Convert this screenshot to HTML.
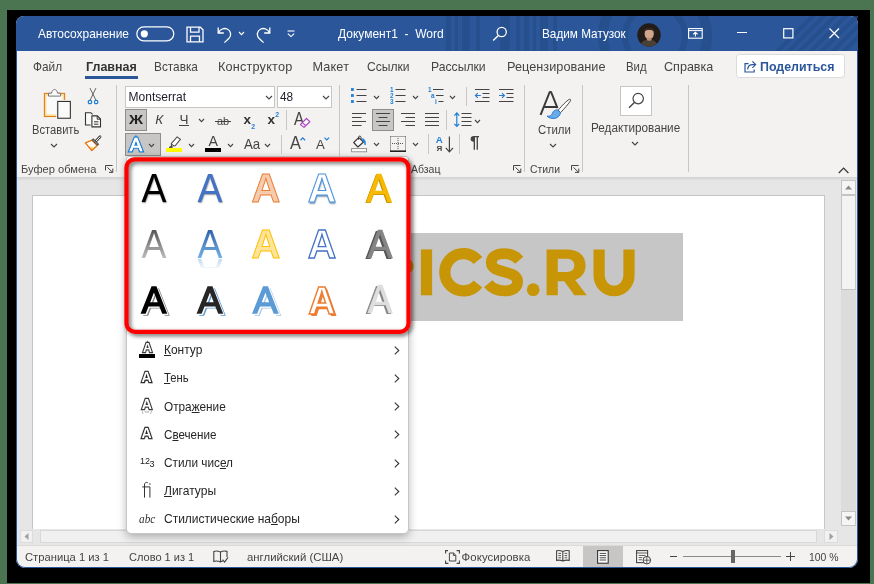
<!DOCTYPE html>
<html><head><meta charset="utf-8"><title>Word</title>
<style>
html,body{margin:0;padding:0;}
body{width:874px;height:584px;overflow:hidden;background:#4b7551;position:relative;font-family:"Liberation Sans",sans-serif;}
#r div,#r span,#r svg{position:absolute;}
#r span{white-space:pre;}
#r svg{overflow:visible;}
#r{will-change:transform;}
</style></head><body><div id="r">
<div style="left:7px;top:10px;width:863px;height:573px;background:#000;"></div>
<div style="left:16px;top:16px;width:842px;height:552px;background:#f3f2f1;border-radius:8px 8px 9px 9px;overflow:hidden;"></div>
<div style="left:16px;top:16px;width:842px;height:35px;background:#2b579a;border-radius:8px 8px 0 0;"></div>
<svg style="left:380px;top:16px;overflow:hidden;" width="478" height="35" viewBox="0 0 478 35"><g fill="#254d8a" opacity="0.75"><rect x="66" y="0" width="5" height="35" /><rect x="75" y="0" width="3" height="35" /><rect x="82" y="0" width="8" height="35" /><rect x="96" y="0" width="4" height="35" /><rect x="120" y="0" width="10" height="35" /><rect x="136" y="0" width="4" height="35" /><rect x="144" y="0" width="5" height="35" /><rect x="153" y="0" width="3" height="35" /><rect x="160" y="0" width="8" height="35" /><rect x="173" y="0" width="4" height="35" /><circle cx="275" cy="20" r="52" fill="none" stroke="#254d8a" stroke-width="10"/><circle cx="275" cy="20" r="30" fill="none" stroke="#254d8a" stroke-width="6"/><path d="M395 35 L430 0 h6 L401 35 z"/><path d="M406 35 L441 0 h6 L412 35 z"/><path d="M417 35 L452 0 h6 L423 35 z"/><path d="M428 35 L463 0 h6 L434 35 z"/><path d="M439 35 L474 0 h6 L445 35 z"/><path d="M450 35 L485 0 h6 L456 35 z"/><path d="M461 35 L496 0 h6 L467 35 z"/></g></svg>
<span style="left:38.30px;top:25.00px;font-size:13px;line-height:18px;color:#fff;transform:scaleX(0.9180);transform-origin:0 50%;">Автосохранение</span>
<svg style="left:136px;top:26px;" width="39" height="16" viewBox="0 0 39 16"><rect x="0.8" y="0.8" width="37" height="14" rx="7" fill="none" stroke="#fff" stroke-width="1.2"/><circle cx="8.3" cy="7.8" r="3.6" fill="#fff"/></svg>
<svg style="left:186px;top:26px;" width="18" height="17" viewBox="0 0 18 17"><path d="M1 1.2 H14.3 L17 3.8 V15.8 H1 Z M4.5 1.2 V6.2 H13 V1.2 M4.5 15.8 V10.2 H13.5 V15.8" fill="none" stroke="#fff" stroke-width="1.3"/></svg>
<svg style="left:216px;top:26px;" width="18" height="18" viewBox="0 0 18 18"><path d="M2.2 1.5 V7 H7.8 M2.5 6.8 C4.2 3.2 8 1.6 11.2 3 C15.2 4.8 15.6 9.6 13 12.3 L8.4 16.6" fill="none" stroke="#fff" stroke-width="1.3"/></svg>
<svg style="left:237.5px;top:31.200000000000003px;" width="7" height="4.6" viewBox="0 0 7 4.6"><path d="M1 1 L3.5 3.6 L6 1" fill="none" stroke="#fff" stroke-width="1.1"/></svg>
<svg style="left:254px;top:26px;" width="18" height="18" viewBox="0 0 18 18"><path d="M15.8 1.5 V7 H10.2 M15.5 6.8 C13.8 3.2 10 1.6 6.8 3 C2.8 4.8 2.4 9.6 5 12.3 L9.6 16.6" fill="none" stroke="#fff" stroke-width="1.3"/></svg>
<svg style="left:286px;top:30px;" width="10" height="8" viewBox="0 0 10 8"><path d="M1.5 1 H8.5" stroke="#fff" stroke-width="1.1"/><path d="M1.8 3.6 L5 6.6 L8.2 3.6" fill="none" stroke="#fff" stroke-width="1.1"/></svg>
<span style="left:337.80px;top:25.00px;font-size:13px;line-height:18px;color:#fff;transform:scaleX(0.9229);transform-origin:0 50%;">Документ1  -  Word</span>
<svg style="left:492px;top:26px;" width="16" height="16" viewBox="0 0 16 16"><circle cx="9.7" cy="6" r="4.6" fill="none" stroke="#fff" stroke-width="1.3"/><path d="M6.4 9.4 L1.2 14.6" stroke="#fff" stroke-width="1.4"/></svg>
<span style="left:542.40px;top:25.00px;font-size:13px;line-height:18px;color:#fff;transform:scaleX(0.9047);transform-origin:0 50%;">Вадим Матузок</span>
<svg style="left:637px;top:22.5px;" width="24" height="24" viewBox="0 0 24 24"><defs><clipPath id="av"><circle cx="12" cy="12" r="11.7"/></clipPath></defs><circle cx="12" cy="12" r="11.7" fill="#231c18"/><g clip-path="url(#av)"><ellipse cx="12.2" cy="10.8" rx="4.6" ry="5.6" fill="#d2a68c"/><path d="M6.5 9 C6.5 3.5 17.5 3.5 17.8 9 C16 6.6 9 6.4 6.5 9z" fill="#3a2a20"/><path d="M3 24 C4 17.5 8 16.5 12 17 C16 16.5 20 17.5 21 24z" fill="#4a4038"/><ellipse cx="12.2" cy="16.2" rx="2.3" ry="1.6" fill="#b98d75"/></g></svg>
<svg style="left:688px;top:28px;" width="15" height="11" viewBox="0 0 15 11"><rect x="0.6" y="0.6" width="13.6" height="9.6" fill="none" stroke="#fff" stroke-width="1.1"/><path d="M0.6 2.6 H14.2" stroke="#fff" stroke-width="1"/><path d="M7.4 8.6 V4.4 M5.2 6.3 L7.4 4.2 L9.6 6.3" fill="none" stroke="#fff" stroke-width="1.1"/></svg>
<div style="left:737px;top:31.5px;width:10px;height:1px;background:#fff;"></div>
<svg style="left:783px;top:28px;" width="11" height="11" viewBox="0 0 11 11"><rect x="0.7" y="0.7" width="9.2" height="9.2" fill="none" stroke="#fff" stroke-width="1.2"/></svg>
<svg style="left:829px;top:28px;" width="11" height="11" viewBox="0 0 11 11"><path d="M0.5 0.5 L10 10 M10 0.5 L0.5 10" stroke="#fff" stroke-width="1.2"/></svg>
<span style="left:32.50px;top:58.00px;font-size:12.7px;line-height:18px;color:#444;transform:scaleX(0.9314);transform-origin:0 50%;">Файл</span>
<span style="left:85.70px;top:58.00px;font-size:12.9px;line-height:18px;color:#333;transform:scaleX(0.9688);transform-origin:0 50%;font-weight:700;">Главная</span>
<div style="left:85px;top:75.8px;width:53px;height:3px;background:#2b579a;"></div>
<span style="left:154.30px;top:58.00px;font-size:12.7px;line-height:18px;color:#444;transform:scaleX(0.9313);transform-origin:0 50%;">Вставка</span>
<span style="left:217.90px;top:58.00px;font-size:12.7px;line-height:18px;color:#444;letter-spacing:0.201px;">Конструктор</span>
<span style="left:312.40px;top:58.00px;font-size:12.7px;line-height:18px;color:#444;letter-spacing:0.165px;">Макет</span>
<span style="left:367.30px;top:58.00px;font-size:12.7px;line-height:18px;color:#444;transform:scaleX(0.9529);transform-origin:0 50%;">Ссылки</span>
<span style="left:431.00px;top:58.00px;font-size:12.7px;line-height:18px;color:#444;transform:scaleX(0.9593);transform-origin:0 50%;">Рассылки</span>
<span style="left:507.00px;top:58.00px;font-size:12.7px;line-height:18px;color:#444;letter-spacing:0.043px;">Рецензирование</span>
<span style="left:626.20px;top:58.00px;font-size:12.7px;line-height:18px;color:#444;transform:scaleX(0.8962);transform-origin:0 50%;">Вид</span>
<span style="left:664.30px;top:58.00px;font-size:12.7px;line-height:18px;color:#444;transform:scaleX(0.9910);transform-origin:0 50%;">Справка</span>
<div style="left:736px;top:54.3px;width:109px;height:23.4px;background:#fff;border:1px solid #dddbd9;border-radius:3.5px;box-sizing:border-box;"></div>
<svg style="left:744px;top:59.5px;" width="13" height="13" viewBox="0 0 13 13"><path d="M4.6 3.6 H1 V12 H10.2 V9.4" fill="none" stroke="#2b579a" stroke-width="1.2"/><path d="M3.6 9.4 C3.9 6.2 5.8 4.6 8.6 4.6 H11.2 M8.4 1.4 L11.6 4.6 L8.4 7.8" fill="none" stroke="#2b579a" stroke-width="1.2"/></svg>
<span style="left:760.40px;top:57.00px;font-size:13.4px;line-height:19px;color:#2b579a;transform:scaleX(0.9266);transform-origin:0 50%;font-weight:700;">Поделиться</span>
<svg style="left:43px;top:88px;" width="29" height="32" viewBox="0 0 29 32"><rect x="1.4" y="5.4" width="20.2" height="23.1" fill="#fafafa" stroke="#e07a10" stroke-width="1.1"/>
<rect x="2.7" y="6.7" width="17.6" height="20.5" fill="none" stroke="#fbdc9a" stroke-width="1.5"/>
<path d="M5.5 8.1 V5.2 H8.5 C9 2.6 10.2 1.5 11.55 1.5 C12.9 1.5 14.1 2.6 14.6 5.2 H17.6 V8.1 Z" fill="#fafafa" stroke="#777" stroke-width="1"/>
<rect x="13.2" y="11.9" width="15.7" height="19.9" fill="#f3f2f1"/>
<rect x="14.75" y="13.45" width="12.6" height="16.8" fill="#fafafa" stroke="#333" stroke-width="1.1"/></svg>
<span style="left:31.60px;top:122.00px;font-size:12px;line-height:17px;color:#444;transform:scaleX(0.9296);transform-origin:0 50%;">Вставить</span>
<svg style="left:50.3px;top:142.7px;" width="8" height="5" viewBox="0 0 8 5"><path d="M1 1 L4.0 4 L7 1" fill="none" stroke="#444" stroke-width="1.1"/></svg>
<svg style="left:87px;top:88px;" width="12" height="17" viewBox="0 0 12 17"><path d="M2.95 0.1 L9.1 12.5 M8.9 0.1 L2.95 12.5" stroke="#555" stroke-width="0.9" fill="none"/>
<rect x="1.3" y="12.4" width="3.3" height="3.3" rx="1.2" fill="none" stroke="#1e7fd6" stroke-width="1.2"/><rect x="7.5" y="12.4" width="3.3" height="3.3" rx="1.2" fill="none" stroke="#1e7fd6" stroke-width="1.2"/></svg>
<svg style="left:84px;top:111px;" width="18" height="17" viewBox="0 0 18 17"><path d="M6.6 14 H1.5 V1.7 H6.8 L8.6 3.4" fill="#fafafa" stroke="#333" stroke-width="1.1"/>
<path d="M7.9 4.9 H13.4 L16.5 8 V15.9 H7.9 Z" fill="#fafafa" stroke="#333" stroke-width="1.1"/><path d="M13.2 5 V8.2 H16.4" fill="none" stroke="#333" stroke-width="1"/>
<path d="M10 10.8 H14.4 M10 13.2 H14.4" stroke="#333" stroke-width="1"/></svg>
<svg style="left:84px;top:134px;" width="18" height="18" viewBox="0 0 18 18"><path d="M8 6.2 L1.4 8.8 L7.8 16.5 L13.2 11.6 Z" fill="#fff" stroke="#e8720c" stroke-width="1.3" stroke-linejoin="round"/>
<path d="M6 12.6 L7.8 15.4 L10 13.2 Z" fill="#fbd35a"/>
<path d="M16 2.8 L11.6 7.4" stroke="#444" stroke-width="2.8" stroke-linecap="round"/><path d="M16 2.8 L11.8 7.2" stroke="#fff" stroke-width="1" stroke-linecap="round"/>
<path d="M8.4 5 L14.4 11" stroke="#444" stroke-width="2.4"/><path d="M8.9 5.5 L13.9 10.5" stroke="#ddd" stroke-width="0.6"/></svg>
<span style="left:20.60px;top:161.00px;font-size:11.4px;line-height:16px;color:#444;transform:scaleX(0.9739);transform-origin:0 50%;">Буфер обмена</span>
<svg style="left:105px;top:165px;" width="9" height="9" viewBox="0 0 9 9"><path d="M0.5 5.4 V0.5 H7.6 M2.4 2.4 L7.5 7.2 M4 7.4 H7.8 V3.6" fill="none" stroke="#444" stroke-width="1"/></svg>
<div style="left:116px;top:85px;width:1px;height:87px;background:#c8c6c4;"></div>
<div style="left:125px;top:85.5px;width:150px;height:22px;background:#fff;border:1px solid #c8c6c4;box-sizing:border-box;"></div>
<span style="left:128.60px;top:89.00px;font-size:12px;line-height:17px;color:#1c1c28;letter-spacing:0.016px;">Montserrat</span>
<svg style="left:264.8px;top:94.5px;" width="8" height="5" viewBox="0 0 8 5"><path d="M1 1 L4.0 4 L7 1" fill="none" stroke="#444" stroke-width="1.1"/></svg>
<div style="left:277px;top:85.5px;width:54.5px;height:22px;background:#fff;border:1px solid #c8c6c4;box-sizing:border-box;"></div>
<span style="left:279.60px;top:89.00px;font-size:12px;line-height:17px;color:#1c1c28;transform:scaleX(0.9835);transform-origin:0 50%;">48</span>
<svg style="left:321.9px;top:94.5px;" width="8" height="5" viewBox="0 0 8 5"><path d="M1 1 L4.0 4 L7 1" fill="none" stroke="#444" stroke-width="1.1"/></svg>
<div style="left:125px;top:109px;width:22px;height:22px;background:#c8c6c4;border:1px solid #8f8d8b;box-sizing:border-box;"></div>
<span style="left:128.98px;top:110.00px;font-size:13.5px;line-height:19px;color:#222;transform:scaleX(1.1496);transform-origin:0 50%;font-weight:700;">Ж</span>
<span style="left:155.20px;top:110.00px;font-size:13.5px;line-height:19px;color:#444;font-style:italic;">К</span>
<span style="left:179.60px;top:110.00px;font-size:13.5px;line-height:19px;color:#444;">Ч</span>
<div style="left:179px;top:125.1px;width:9.8px;height:1.1px;background:#444;"></div>
<svg style="left:198.0px;top:118.10000000000001px;" width="7" height="4.6" viewBox="0 0 7 4.6"><path d="M1 1 L3.5 3.6 L6 1" fill="none" stroke="#444" stroke-width="1.1"/></svg>
<span style="left:217.00px;top:113.00px;font-size:11.5px;line-height:16px;color:#444;transform:scaleX(0.9557);transform-origin:0 50%;">ab</span>
<div style="left:214.7px;top:120.6px;width:16.4px;height:1px;background:#444;"></div>
<span style="left:243.60px;top:110.00px;font-size:13.5px;line-height:19px;color:#333;font-weight:700;">x</span>
<span style="left:251.20px;top:122.00px;font-size:7px;line-height:10px;color:#2b7cd3;font-weight:700;">2</span>
<span style="left:267.50px;top:110.00px;font-size:13.5px;line-height:19px;color:#333;font-weight:700;">x</span>
<span style="left:275.20px;top:110.00px;font-size:7px;line-height:10px;color:#2b7cd3;font-weight:700;">2</span>
<div style="left:286px;top:110px;width:1px;height:20px;background:#c8c6c4;"></div>
<span style="left:294.10px;top:106.00px;font-size:18.3px;line-height:26px;color:#444;transform:scaleX(0.8238);transform-origin:0 50%;">A</span>
<svg style="left:300px;top:118px;" width="11" height="10" viewBox="300 118 11 10"><path d="M300.4 124.6 L306.5 118.5 L309.8 121.7 L304 127.4 Z M302.4 122.6 L305.8 125.8" fill="#fff" stroke="#b146c2" stroke-width="1.2" stroke-linejoin="round"/></svg>
<div style="left:125px;top:133px;width:36px;height:22.5px;background:#c8c6c4;border:1px solid #8f8d8b;box-sizing:border-box;"></div>
<span style="left:129.80px;top:132.00px;font-size:18.6px;line-height:26px;color:#fff;-webkit-text-stroke:3.2px #1e7fd6;paint-order:stroke fill;text-shadow:0 0 1.5px #6ab0f0;">A</span>
<span style="left:129.80px;top:132.00px;font-size:18.6px;line-height:26px;color:#fff;-webkit-text-stroke:0.5px #fff;">A</span>
<svg style="left:148.0px;top:142.7px;" width="7" height="4.6" viewBox="0 0 7 4.6"><path d="M1 1 L3.5 3.6 L6 1" fill="none" stroke="#444" stroke-width="1.1"/></svg>
<svg style="left:167.5px;top:135.8px;" width="14" height="12" viewBox="0 0 15 13"><path d="M9.8 1 L13.4 3.6 L7.6 10.6 L3.8 10.8 L3.4 8.2 Z" fill="#fff" stroke="#444" stroke-width="1.1"/><path d="M3.4 8.4 L6.8 10.8 M3.6 10.8 L1 12.4 H4.6 Z" fill="#444" stroke="#444" stroke-width="0.9"/></svg>
<div style="left:166.3px;top:148px;width:16px;height:3.8px;background:#ffff00;"></div>
<svg style="left:187.9px;top:142.7px;" width="7" height="4.6" viewBox="0 0 7 4.6"><path d="M1 1 L3.5 3.6 L6 1" fill="none" stroke="#444" stroke-width="1.1"/></svg>
<span style="left:208.60px;top:131.00px;font-size:14.2px;line-height:20px;color:#444;">A</span>
<div style="left:205.3px;top:148px;width:16px;height:3.8px;background:#000;"></div>
<svg style="left:226.9px;top:142.7px;" width="7" height="4.6" viewBox="0 0 7 4.6"><path d="M1 1 L3.5 3.6 L6 1" fill="none" stroke="#444" stroke-width="1.1"/></svg>
<span style="left:244.00px;top:134.00px;font-size:14.3px;line-height:20px;color:#444;transform:scaleX(0.9305);transform-origin:0 50%;">Aa</span>
<svg style="left:264.0px;top:142.7px;" width="7" height="4.6" viewBox="0 0 7 4.6"><path d="M1 1 L3.5 3.6 L6 1" fill="none" stroke="#444" stroke-width="1.1"/></svg>
<div style="left:281px;top:135px;width:1px;height:19px;background:#c8c6c4;"></div>
<span style="left:290.40px;top:130.00px;font-size:18.3px;line-height:26px;color:#444;transform:scaleX(0.8972);transform-origin:0 50%;">A</span>
<svg style="left:299.8px;top:137px;" width="6" height="4" viewBox="0 0 6 4"><path d="M0.5 3.2 L2.8 0.9 L5.1 3.2" fill="none" stroke="#1e7fd6" stroke-width="1.3"/></svg>
<span style="left:315.90px;top:136.00px;font-size:13px;line-height:18px;color:#444;transform:scaleX(1.0103);transform-origin:0 50%;">A</span>
<svg style="left:324px;top:137px;" width="6" height="4" viewBox="0 0 6 4"><path d="M0.5 0.6 L2.8 2.9 L5.1 0.6" fill="none" stroke="#1e7fd6" stroke-width="1.3"/></svg>
<div style="left:339px;top:85px;width:1px;height:87px;background:#c8c6c4;"></div>
<svg style="left:351px;top:88px;" width="16" height="16" viewBox="0 0 16 16"><rect x="0" y="0.10000000000000009" width="2.8" height="2.8" fill="#1e7fd6"/><path d="M5.5 1.5 H15.5" stroke="#444" stroke-width="1"/><rect x="0" y="6.1" width="2.8" height="2.8" fill="#1e7fd6"/><path d="M5.5 7.5 H15.5" stroke="#444" stroke-width="1"/><rect x="0" y="12.1" width="2.8" height="2.8" fill="#1e7fd6"/><path d="M5.5 13.5 H15.5" stroke="#444" stroke-width="1"/></svg>
<svg style="left:372.5px;top:94.7px;" width="7" height="4.6" viewBox="0 0 7 4.6"><path d="M1 1 L3.5 3.6 L6 1" fill="none" stroke="#444" stroke-width="1.1"/></svg>
<svg style="left:389.5px;top:88px;" width="16" height="16" viewBox="0 0 16 16"><text x="0" y="3.7" font-size="6.4" font-weight="700" fill="#1e7fd6" font-family="Liberation Sans, sans-serif">1</text><path d="M5.5 1.5 H15.5" stroke="#444" stroke-width="1"/><text x="0" y="9.7" font-size="6.4" font-weight="700" fill="#1e7fd6" font-family="Liberation Sans, sans-serif">2</text><path d="M5.5 7.5 H15.5" stroke="#444" stroke-width="1"/><text x="0" y="15.7" font-size="6.4" font-weight="700" fill="#1e7fd6" font-family="Liberation Sans, sans-serif">3</text><path d="M5.5 13.5 H15.5" stroke="#444" stroke-width="1"/></svg>
<svg style="left:411.5px;top:94.7px;" width="7" height="4.6" viewBox="0 0 7 4.6"><path d="M1 1 L3.5 3.6 L6 1" fill="none" stroke="#444" stroke-width="1.1"/></svg>
<svg style="left:428px;top:88px;" width="16" height="17" viewBox="0 0 16 17"><text x="0" y="4" font-size="6.4" font-weight="700" fill="#1e7fd6" font-family="Liberation Sans, sans-serif">1</text><path d="M5 1.5 H15.5" stroke="#444" stroke-width="1"/><text x="3" y="10" font-size="6.4" font-weight="700" fill="#1e7fd6" font-family="Liberation Sans, sans-serif">a</text><path d="M8 7.5 H15.5" stroke="#444" stroke-width="1"/><text x="7" y="16" font-size="6.4" font-weight="700" fill="#1e7fd6" font-family="Liberation Sans, sans-serif">i</text><path d="M10.5 13.5 H15.5" stroke="#444" stroke-width="1"/></svg>
<svg style="left:448.9px;top:94.7px;" width="7" height="4.6" viewBox="0 0 7 4.6"><path d="M1 1 L3.5 3.6 L6 1" fill="none" stroke="#444" stroke-width="1.1"/></svg>
<div style="left:466px;top:87px;width:1px;height:19px;background:#c8c6c4;"></div>
<svg style="left:474.5px;top:89px;" width="15" height="14" viewBox="0 0 15 14"><path d="M0 0.5 H14.5 M7.5 4.5 H14.5 M7.5 8.5 H14.5 M0 12.5 H14.5" stroke="#444" stroke-width="1"/><path d="M5.8 6.5 H0.6 M2.8 4.1 L0.4 6.5 L2.8 8.9" fill="none" stroke="#2b7cd3" stroke-width="1.2"/></svg>
<svg style="left:499px;top:89px;" width="15" height="14" viewBox="0 0 15 14"><path d="M0 0.5 H14.5 M7.5 4.5 H14.5 M7.5 8.5 H14.5 M0 12.5 H14.5" stroke="#444" stroke-width="1"/><path d="M0 6.5 H5.2 M3 4.1 L5.4 6.5 L3 8.9" fill="none" stroke="#2b7cd3" stroke-width="1.2"/></svg>
<svg style="left:352px;top:113px;" width="14" height="17" viewBox="0 0 14 17"><path d="M0 0.5 H14" stroke="#444" stroke-width="1"/><path d="M0 4.5 H9.5" stroke="#444" stroke-width="1"/><path d="M0 8.5 H14" stroke="#444" stroke-width="1"/><path d="M0 12.5 H9.5" stroke="#444" stroke-width="1"/></svg>
<div style="left:372px;top:109px;width:22px;height:22px;background:#c8c6c4;border:1px solid #8f8d8b;box-sizing:border-box;"></div>
<svg style="left:376px;top:113px;" width="14" height="17" viewBox="0 0 14 17"><path d="M0.0 0.5 H14.0" stroke="#444" stroke-width="1"/><path d="M2.5 4.5 H11.5" stroke="#444" stroke-width="1"/><path d="M0.0 8.5 H14.0" stroke="#444" stroke-width="1"/><path d="M2.5 12.5 H11.5" stroke="#444" stroke-width="1"/></svg>
<svg style="left:400.5px;top:113px;" width="14" height="17" viewBox="0 0 14 17"><path d="M0 0.5 H14" stroke="#444" stroke-width="1"/><path d="M4.5 4.5 H14.0" stroke="#444" stroke-width="1"/><path d="M0 8.5 H14" stroke="#444" stroke-width="1"/><path d="M4.5 12.5 H14.0" stroke="#444" stroke-width="1"/></svg>
<svg style="left:424.5px;top:113px;" width="14" height="17" viewBox="0 0 14 17"><path d="M0 0.5 H14" stroke="#444" stroke-width="1"/><path d="M0 4.5 H14" stroke="#444" stroke-width="1"/><path d="M0 8.5 H14" stroke="#444" stroke-width="1"/><path d="M0 12.5 H14" stroke="#444" stroke-width="1"/></svg>
<div style="left:446px;top:110px;width:1px;height:20px;background:#c8c6c4;"></div>
<svg style="left:453.5px;top:112px;" width="18" height="16" viewBox="0 0 18 16"><path d="M2.8 1 V14.4 M0.4 3.6 L2.8 1 L5.2 3.6 M0.4 11.8 L2.8 14.4 L5.2 11.8" fill="none" stroke="#1e7fd6" stroke-width="1.2"/><path d="M7.5 1.5 H17.5 M7.5 5.5 H17.5 M7.5 9.5 H17.5 M7.5 13.5 H17.5" stroke="#444" stroke-width="1"/></svg>
<svg style="left:474.1px;top:118.7px;" width="7" height="4.6" viewBox="0 0 7 4.6"><path d="M1 1 L3.5 3.6 L6 1" fill="none" stroke="#444" stroke-width="1.1"/></svg>
<svg style="left:351px;top:135px;" width="17" height="18" viewBox="0 0 17 18"><path d="M7.7 2.7 L12.5 7 L6.9 12 L2.7 7.5 Z" fill="#fafafa" stroke="#333" stroke-width="1.1" stroke-linejoin="round"/><path d="M7.5 4.6 V2.4 C7.6 0.6 9.9 0.6 10 2.4 V4.6" fill="none" stroke="#333" stroke-width="1"/><path d="M11.6 3.6 C13.6 4.2 14.8 6.2 14.2 10 C13.6 8 13 6.8 11.8 6 Z" fill="#1e7fd6" stroke="#1e7fd6" stroke-width="0.8"/><rect x="0.6" y="13.6" width="15" height="3.2" fill="#fff" stroke="#8a8a8a" stroke-width="0.9"/></svg>
<svg style="left:373.0px;top:142.2px;" width="7" height="4.6" viewBox="0 0 7 4.6"><path d="M1 1 L3.5 3.6 L6 1" fill="none" stroke="#444" stroke-width="1.1"/></svg>
<svg style="left:389.5px;top:136px;" width="16" height="16" viewBox="0 0 16 16"><path d="M0.5 0.5 H15.5 M0.5 0.5 V15 M15.5 0.5 V15 M8 2 V14 M2 7.5 H14" stroke="#555" stroke-width="1" stroke-dasharray="1 1" fill="none"/><path d="M0 15.2 H16" stroke="#222" stroke-width="1.6"/></svg>
<svg style="left:412.0px;top:142.2px;" width="7" height="4.6" viewBox="0 0 7 4.6"><path d="M1 1 L3.5 3.6 L6 1" fill="none" stroke="#444" stroke-width="1.1"/></svg>
<div style="left:428px;top:134px;width:1px;height:20px;background:#c8c6c4;"></div>
<span style="left:435.80px;top:133.00px;font-size:9.8px;line-height:14px;color:#1e7fd6;font-weight:700;">А</span>
<span style="left:436.60px;top:143.00px;font-size:8px;line-height:11px;color:#444;font-weight:700;">Я</span>
<svg style="left:444.5px;top:135.5px;" width="9" height="17" viewBox="0 0 9 17"><path d="M4.4 0.5 V15.6 M0.8 11.8 L4.4 15.8 L8 11.8" fill="none" stroke="#444" stroke-width="1.2"/></svg>
<div style="left:459px;top:134px;width:1px;height:20px;background:#c8c6c4;"></div>
<span style="left:470.00px;top:132.00px;font-size:16px;line-height:22px;color:#444;transform:scaleX(1.0811);transform-origin:0 50%;font-weight:700;">¶</span>
<span style="left:410.50px;top:161.00px;font-size:11.4px;line-height:16px;color:#444;transform:scaleX(0.9225);transform-origin:0 50%;">Абзац</span>
<svg style="left:513px;top:165px;" width="9" height="9" viewBox="0 0 9 9"><path d="M0.5 5.4 V0.5 H7.6 M2.4 2.4 L7.5 7.2 M4 7.4 H7.8 V3.6" fill="none" stroke="#444" stroke-width="1"/></svg>
<div style="left:524px;top:85px;width:1px;height:87px;background:#c8c6c4;"></div>
<svg style="left:526px;top:84px;" width="60" height="40" viewBox="526 84 60 40"><path d="M540.6 114.9 L549.7 92 H551.1 L557.5 108.2 M544.4 107 H557" fill="none" stroke="#3a3a3a" stroke-width="2" stroke-linejoin="bevel"/>
<path d="M558.2 110.2 C562 105.5 566.5 101 569.2 99.4 C570.6 98.8 571 100 570.2 101.2 C568 104.5 564 109 560.6 112.6 Z" fill="#fff" stroke="#333" stroke-width="0.9"/>
<path d="M557.6 110 C555 109.6 553 111 552.4 113.4 C551.8 115.6 549.6 116.4 547 116.2 C549.4 118.4 553.6 119.2 556.6 117.8 C559.4 116.4 560.6 113.8 560.4 112.4 Z" fill="#6aaceb" stroke="#1e6fc8" stroke-width="0.9"/></svg>
<span style="left:537.70px;top:122.00px;font-size:12px;line-height:17px;color:#444;transform:scaleX(0.9520);transform-origin:0 50%;">Стили</span>
<svg style="left:549.4px;top:142.5px;" width="8" height="5" viewBox="0 0 8 5"><path d="M1 1 L4.0 4 L7 1" fill="none" stroke="#444" stroke-width="1.1"/></svg>
<span style="left:530.00px;top:161.00px;font-size:11.4px;line-height:16px;color:#444;transform:scaleX(0.9137);transform-origin:0 50%;">Стили</span>
<svg style="left:571px;top:165px;" width="9" height="9" viewBox="0 0 9 9"><path d="M0.5 5.4 V0.5 H7.6 M2.4 2.4 L7.5 7.2 M4 7.4 H7.8 V3.6" fill="none" stroke="#444" stroke-width="1"/></svg>
<div style="left:582px;top:85px;width:1px;height:87px;background:#c8c6c4;"></div>
<div style="left:619.5px;top:85.5px;width:32.5px;height:30px;background:#fff;border:1px solid #c8c6c4;box-sizing:border-box;"></div>
<svg style="left:627.5px;top:92px;" width="17" height="17" viewBox="0 0 17 17"><circle cx="10.2" cy="6.6" r="5.2" fill="none" stroke="#444" stroke-width="1.2"/><path d="M6.4 10.4 L1 15.8" stroke="#444" stroke-width="1.4"/></svg>
<span style="left:591.30px;top:120.00px;font-size:12px;line-height:17px;color:#444;transform:scaleX(0.9755);transform-origin:0 50%;">Редактирование</span>
<svg style="left:631.3px;top:141.0px;" width="8" height="5" viewBox="0 0 8 5"><path d="M1 1 L4.0 4 L7 1" fill="none" stroke="#444" stroke-width="1.1"/></svg>
<div style="left:688px;top:85px;width:1px;height:87px;background:#c8c6c4;"></div>
<svg style="left:838px;top:167px;" width="12" height="7" viewBox="0 0 12 7"><path d="M0.8 6 L5.6 1.2 L10.4 6" fill="none" stroke="#333" stroke-width="1.2"/></svg>
<div style="left:17px;top:177px;width:840px;height:368px;background:linear-gradient(#d2d2d2,#e6e6e6 4px,#e6e6e6);"></div>
<div style="left:32px;top:195px;width:793px;height:334px;background:#fff;border:1px solid #c6c6c6;border-bottom:none;box-sizing:border-box;"></div>
<div style="left:411px;top:233px;width:272px;height:88px;background:#c6c6c6;"></div>
<svg style="left:400px;top:240px;" width="260" height="65" viewBox="400 240 260 65"><g fill="#c79505">
<ellipse cx="398" cy="266.2" rx="15.6" ry="10.2"/>
<rect x="420.9" y="249.4" width="11.2" height="45.9"/>
<circle cx="533.2" cy="289.7" r="6.4"/>
<path fill-rule="evenodd" d="M546.6 249.4 H567 C579 249.4 585.6 256 585.6 265.5 C585.6 272.6 581.6 277.6 575.2 279.9 L586.8 295.3 H574.4 L564.2 281.2 H557.8 V295.3 H546.6 Z M557.8 258.7 V272 H566.4 C571.6 272 574.3 269.5 574.3 265.3 C574.3 261.1 571.6 258.7 566.4 258.7 Z"/>
<path d="M593.5 249.4 V275.6 A20.55 20.7 0 0 0 634.6 275.6 V249.4 H623.4 V275.2 A9.35 10.6 0 0 1 604.7 275.2 V249.4 Z"/>
</g>
<path d="M477.9 260.6 A18.6 18.6 0 1 0 477.9 283.9" fill="none" stroke="#c79505" stroke-width="11.2"/>
<path d="M519.2 260.2 C515 255.3 510 253.6 504.2 253.6 C496.2 253.6 491.3 257.2 491.3 262.4 C491.3 268.2 496.4 270 504.6 271.9 C512.8 273.8 517.6 276 517.6 281.8 C517.6 287.4 512.4 290.9 504.6 290.9 C497.6 290.9 492.2 288.6 488.2 283.8" fill="none" stroke="#c79505" stroke-width="10.8"/>
</svg>
<div style="left:841px;top:180px;width:15px;height:346px;background:#dcdcdc;"></div>
<div style="left:841px;top:180px;width:15px;height:14.5px;background:#f5f5f5;border:1px solid #c4c4c4;box-sizing:border-box;"></div>
<svg style="left:845px;top:184.5px;" width="7" height="5" viewBox="0 0 7 5"><path d="M0 4.5 L3.5 0.5 L7 4.5 Z" fill="#8a8a8a"/></svg>
<div style="left:841px;top:195px;width:15px;height:95px;background:#f3f3f3;border:1px solid #c4c4c4;box-sizing:border-box;"></div>
<div style="left:841px;top:511px;width:15px;height:14.5px;background:#f5f5f5;border:1px solid #c4c4c4;box-sizing:border-box;"></div>
<svg style="left:845px;top:516px;" width="7" height="5" viewBox="0 0 7 5"><path d="M0 0.5 L3.5 4.5 L7 0.5 Z" fill="#8a8a8a"/></svg>
<div style="left:17px;top:529px;width:840px;height:15.5px;background:#e6e6e6;"></div>
<div style="left:19.5px;top:529.5px;width:13.5px;height:13.5px;background:#f1f1f1;border:1px solid #dcdcdc;box-sizing:border-box;"></div>
<svg style="left:24px;top:533px;" width="5" height="7" viewBox="0 0 5 7"><path d="M4.5 0 L0.5 3.5 L4.5 7 Z" fill="#a0a0a0"/></svg>
<div style="left:39.5px;top:529.5px;width:777px;height:13.5px;background:#f0f0f0;border:1px solid #d8d8d8;box-sizing:border-box;"></div>
<div style="left:824px;top:529.5px;width:13.5px;height:13.5px;background:#f1f1f1;border:1px solid #dcdcdc;box-sizing:border-box;"></div>
<svg style="left:828.5px;top:533px;" width="5" height="7" viewBox="0 0 5 7"><path d="M0.5 0 L4.5 3.5 L0.5 7 Z" fill="#a0a0a0"/></svg>
<div style="left:17px;top:544.5px;width:840px;height:1px;background:#dadada;"></div>
<span style="left:24.60px;top:549.00px;font-size:11.4px;line-height:16px;color:#444;transform:scaleX(0.9843);transform-origin:0 50%;">Страница 1 из 1</span>
<span style="left:129.30px;top:549.00px;font-size:11.4px;line-height:16px;color:#444;transform:scaleX(0.9677);transform-origin:0 50%;">Слово 1 из 1</span>
<svg style="left:213px;top:549.5px;" width="16" height="14" viewBox="0 0 16 14"><path d="M7.5 2 Q4 0.4 0.8 1.4 V11.4 Q4 10.4 7.5 12 Q9 11.2 10 11 M7.5 2 V11.6 M7.5 2 Q10.6 0.4 14 1.4 V7" fill="none" stroke="#444" stroke-width="1.1"/><path d="M9.6 9.6 L11.6 12 L15 7.4" fill="none" stroke="#444" stroke-width="1.1"/></svg>
<span style="left:246.70px;top:549.00px;font-size:11.4px;line-height:16px;color:#444;transform:scaleX(0.9991);transform-origin:0 50%;">английский (США)</span>
<svg style="left:444.5px;top:549.5px;" width="15" height="14" viewBox="0 0 15 14"><path d="M3 0.6 H0.6 V3.4 M0.6 10.6 V13.4 H3.4 M11.6 0.6 H14.4 V3.4 M14.4 10.6 V13.4 H11.6" fill="none" stroke="#444" stroke-width="1.1"/><path d="M4.4 3 H8.6 L10.8 5.2 V11 H4.4 Z M8.4 3.2 V5.4 H10.6" fill="none" stroke="#444" stroke-width="1"/></svg>
<span style="left:461.60px;top:549.00px;font-size:11.4px;line-height:16px;color:#444;letter-spacing:0.068px;">Фокусировка</span>
<svg style="left:556px;top:550px;" width="14" height="12" viewBox="0 0 14 12"><path d="M6.8 1.4 Q3.6 0 0.6 0.8 V10.4 Q3.6 9.6 6.8 11 Q10 9.6 13.2 10.4 V0.8 Q10 0 6.8 1.4 V11" fill="none" stroke="#444" stroke-width="1.1"/><path d="M2.4 3.4 H5 M2.4 5.6 H5 M2.4 7.8 H5 M8.6 3.4 H11.2 M8.6 5.6 H11.2 M8.6 7.8 H11.2" stroke="#444" stroke-width="0.9"/></svg>
<div style="left:582.5px;top:545.5px;width:40px;height:21.5px;background:#c8c6c4;"></div>
<svg style="left:596.5px;top:549.5px;" width="12" height="14" viewBox="0 0 12 14"><rect x="0.6" y="0.6" width="10.6" height="12.6" fill="#fff" stroke="#333" stroke-width="1.1"/><path d="M2.6 3.4 H9.2 M2.6 5.6 H9.2 M2.6 7.8 H9.2 M2.6 10 H9.2" stroke="#333" stroke-width="0.9"/></svg>
<svg style="left:635.5px;top:549.5px;" width="16" height="15" viewBox="0 0 16 15"><rect x="0.6" y="0.6" width="11" height="12" fill="#fff" stroke="#444" stroke-width="1.1"/><path d="M0.6 3 H11.6 M2.6 5.4 H9.6 M2.6 7.6 H6.4 M2.6 9.8 H6" stroke="#444" stroke-width="0.9"/><circle cx="10.8" cy="10.2" r="3.8" fill="#f3f2f1" stroke="#444" stroke-width="1"/><path d="M7 10.2 H14.6 M10.8 6.4 V14" stroke="#444" stroke-width="0.8"/></svg>
<div style="left:669.5px;top:555.5px;width:7.5px;height:1px;background:#444;"></div>
<div style="left:682.5px;top:555.6px;width:98.5px;height:1px;background:#8a8a8a;"></div>
<div style="left:730.5px;top:549.5px;width:4px;height:13px;background:#666;"></div>
<div style="left:785.5px;top:555.5px;width:9px;height:1px;background:#444;"></div>
<div style="left:789.5px;top:551.5px;width:1px;height:9px;background:#444;"></div>
<span style="left:808.60px;top:549.00px;font-size:11.4px;line-height:16px;color:#444;transform:scaleX(0.9159);transform-origin:0 50%;">100 %</span>
<div style="left:125.5px;top:156px;width:283.5px;height:378.3px;background:#fff;border:1px solid #c8c6c4;box-sizing:border-box;border-radius:3px 3px 5px 5px;box-shadow:0 3px 8px rgba(0,0,0,0.28);"></div>
<span style="left:114.30px;top:163.10px;width:80px;text-align:center;font-size:40.7px;line-height:50px;font-weight:400;transform:scaleX(0.92);color:#000;text-shadow:0.6px 1px 1.5px rgba(0,0,0,0.45);">A</span>
<span style="left:170.30px;top:163.10px;width:80px;text-align:center;font-size:40.7px;line-height:50px;font-weight:400;transform:scaleX(0.92);color:#4472c4;text-shadow:0.6px 1px 1.5px rgba(0,0,0,0.4);">A</span>
<span style="left:226.30px;top:162.82px;width:80px;text-align:center;font-size:41.5px;line-height:50px;font-weight:700;transform:scaleX(0.96);color:#f6cbae;-webkit-text-stroke:1px #ed7d31;">A</span>
<span style="left:282.30px;top:162.82px;width:80px;text-align:center;font-size:41.5px;line-height:50px;font-weight:700;transform:scaleX(0.95);color:#fff;-webkit-text-stroke:1.1px #4f94da;text-shadow:0.6px 1.6px 1.6px rgba(50,90,140,0.6);">A</span>
<span style="left:338.80px;top:163.10px;width:80px;text-align:center;font-size:40.7px;line-height:50px;font-weight:400;transform:scaleX(0.92);color:#f8ba00;-webkit-text-stroke:0.7px #f8ba00;text-shadow:-0.9px 0.3px 0 #b88a00,-1.5px 0.6px 0 #c79400,0.5px 0.9px 0 #d8a400;">A</span>
<span style="left:114.30px;top:219.10px;width:80px;text-align:center;font-size:40.7px;line-height:50px;font-weight:400;transform:scaleX(0.92);background:linear-gradient(#555 22%,#bdbdbd 78%);-webkit-background-clip:text;background-clip:text;color:transparent;">A</span>
<span style="left:170.30px;top:219.10px;width:80px;text-align:center;font-size:40.7px;line-height:50px;font-weight:400;transform:scaleX(0.92);background:linear-gradient(#2f62aa 22%,#74b0e6 78%);-webkit-background-clip:text;background-clip:text;color:transparent;">A</span>
<span style="left:170.30px;top:258.30px;width:80px;height:10px;overflow:hidden;"><span style="left:0;top:-10.5px;width:80px;text-align:center;font-size:40.7px;line-height:50px;transform:scale(0.92,-1);color:#74b0e6;opacity:0.65;-webkit-mask-image:linear-gradient(transparent 55%,#000 88%);">A</span></span>
<span style="left:226.30px;top:218.82px;width:80px;text-align:center;font-size:41.5px;line-height:50px;font-weight:700;transform:scaleX(0.96);color:#ffe49a;-webkit-text-stroke:1px #ffc000;">A</span>
<span style="left:282.30px;top:218.82px;width:80px;text-align:center;font-size:41.5px;line-height:50px;font-weight:700;transform:scaleX(0.95);color:#fff;-webkit-text-stroke:1.35px #4472c4;">A</span>
<span style="left:339.50px;top:219.10px;width:80px;text-align:center;font-size:40.7px;line-height:50px;font-weight:400;transform:scaleX(0.92);color:#858585;-webkit-text-stroke:0.7px #858585;text-shadow:-0.9px 0.5px 0 #505050,-1.8px 0.9px 0 #555,-2.5px 1.2px 0 #606060;">A</span>
<span style="left:116.40px;top:277.01px;width:80px;text-align:center;font-size:37.2px;line-height:50px;font-weight:400;transform:scaleX(1);color:#8a8a8a;-webkit-text-stroke:1.4px #8a8a8a;">A</span>
<span style="left:115.20px;top:276.01px;width:80px;text-align:center;font-size:37.2px;line-height:50px;font-weight:400;transform:scaleX(1);color:#fff;-webkit-text-stroke:1.4px #fff;">A</span>
<span style="left:114.50px;top:275.51px;width:80px;text-align:center;font-size:37.2px;line-height:50px;font-weight:400;transform:scaleX(1);color:#fff;-webkit-text-stroke:1.4px #fff;">A</span>
<span style="left:113.90px;top:275.01px;width:80px;text-align:center;font-size:37.2px;line-height:50px;font-weight:400;transform:scaleX(1);color:#000;-webkit-text-stroke:1.4px #000;">A</span>
<span style="left:172.40px;top:277.01px;width:80px;text-align:center;font-size:37.2px;line-height:50px;font-weight:400;transform:scaleX(1);color:#5b9bd5;-webkit-text-stroke:1.4px #5b9bd5;">A</span>
<span style="left:171.20px;top:276.01px;width:80px;text-align:center;font-size:37.2px;line-height:50px;font-weight:400;transform:scaleX(1);color:#fff;-webkit-text-stroke:1.4px #fff;">A</span>
<span style="left:170.50px;top:275.51px;width:80px;text-align:center;font-size:37.2px;line-height:50px;font-weight:400;transform:scaleX(1);color:#fff;-webkit-text-stroke:1.4px #fff;">A</span>
<span style="left:169.90px;top:275.01px;width:80px;text-align:center;font-size:37.2px;line-height:50px;font-weight:400;transform:scaleX(1);color:#262626;-webkit-text-stroke:1.4px #262626;">A</span>
<span style="left:228.00px;top:277.21px;width:80px;text-align:center;font-size:37.2px;line-height:50px;font-weight:400;transform:scaleX(1);color:#a6c8ea;-webkit-text-stroke:1.4px #a6c8ea;">A</span>
<span style="left:226.80px;top:276.21px;width:80px;text-align:center;font-size:37.2px;line-height:50px;font-weight:400;transform:scaleX(1);color:#fff;-webkit-text-stroke:1.4px #fff;">A</span>
<span style="left:226.10px;top:275.71px;width:80px;text-align:center;font-size:37.2px;line-height:50px;font-weight:400;transform:scaleX(1);color:#fff;-webkit-text-stroke:1.4px #fff;">A</span>
<span style="left:225.50px;top:275.21px;width:80px;text-align:center;font-size:37.2px;line-height:50px;font-weight:400;transform:scaleX(1);color:#5b9bd5;-webkit-text-stroke:1.4px #5b9bd5;">A</span>
<span style="left:281.80px;top:275.24px;width:80px;text-align:center;font-size:39.7px;line-height:50px;font-weight:700;transform:scaleX(0.95);color:#fff;-webkit-text-stroke:1.5px #ed7d31;text-shadow:1.2px 0.9px 0 #ed7d31,2px 1.5px 0 #ed7d31;">A</span>
<span style="left:339.50px;top:274.77px;width:80px;text-align:center;font-size:40.2px;line-height:50px;font-weight:400;transform:scaleX(0.92);color:#dedede;-webkit-text-stroke:0.7px #dedede;text-shadow:-0.9px 0.5px 0 #808080,-1.7px 0.9px 0 #8a8a8a,-2.4px 1.2px 0 #999;">A</span>
<svg style="left:120px;top:152px;" width="296" height="188" viewBox="0 0 296 188"><defs><filter id="rs" x="-10%" y="-10%" width="125%" height="125%"><feGaussianBlur in="SourceAlpha" stdDeviation="2"/><feOffset dx="1.6" dy="2"/><feComponentTransfer><feFuncA type="linear" slope="0.6"/></feComponentTransfer><feMerge><feMergeNode/><feMergeNode in="SourceGraphic"/></feMerge></filter></defs><rect x="6.5" y="7.3" width="282" height="172.5" rx="8.5" ry="8.5" fill="none" stroke="#ff0000" stroke-width="4.2" filter="url(#rs)"/></svg>
<span style="left:164.40px;top:342.00px;font-size:12.2px;line-height:17px;color:#262626;transform:scaleX(0.9795);transform-origin:0 50%;"><u>К</u>онтур</span>
<svg style="left:393.5px;top:345.90000000000003px;" width="6" height="9" viewBox="0 0 6 9"><path d="M0.8 0.6 L4.8 4.5 L0.8 8.4" fill="none" stroke="#333" stroke-width="1.1"/></svg>
<span style="left:164.40px;top:370.00px;font-size:12.2px;line-height:17px;color:#262626;transform:scaleX(0.9228);transform-origin:0 50%;"><u>Т</u>ень</span>
<svg style="left:393.5px;top:374.05px;" width="6" height="9" viewBox="0 0 6 9"><path d="M0.8 0.6 L4.8 4.5 L0.8 8.4" fill="none" stroke="#333" stroke-width="1.1"/></svg>
<span style="left:164.40px;top:399.00px;font-size:12.2px;line-height:17px;color:#262626;transform:scaleX(0.9667);transform-origin:0 50%;">Отра<u>ж</u>ение</span>
<svg style="left:393.5px;top:402.20000000000005px;" width="6" height="9" viewBox="0 0 6 9"><path d="M0.8 0.6 L4.8 4.5 L0.8 8.4" fill="none" stroke="#333" stroke-width="1.1"/></svg>
<span style="left:164.40px;top:427.00px;font-size:12.2px;line-height:17px;color:#262626;transform:scaleX(0.9542);transform-origin:0 50%;">С<u>в</u>ечение</span>
<svg style="left:393.5px;top:430.35px;" width="6" height="9" viewBox="0 0 6 9"><path d="M0.8 0.6 L4.8 4.5 L0.8 8.4" fill="none" stroke="#333" stroke-width="1.1"/></svg>
<span style="left:164.40px;top:455.00px;font-size:12.2px;line-height:17px;color:#262626;transform:scaleX(0.9676);transform-origin:0 50%;">Стили чис<u>е</u>л</span>
<svg style="left:393.5px;top:458.50000000000006px;" width="6" height="9" viewBox="0 0 6 9"><path d="M0.8 0.6 L4.8 4.5 L0.8 8.4" fill="none" stroke="#333" stroke-width="1.1"/></svg>
<span style="left:164.40px;top:483.00px;font-size:12.2px;line-height:17px;color:#262626;transform:scaleX(0.9874);transform-origin:0 50%;"><u>Л</u>игатуры</span>
<svg style="left:393.5px;top:486.65000000000003px;" width="6" height="9" viewBox="0 0 6 9"><path d="M0.8 0.6 L4.8 4.5 L0.8 8.4" fill="none" stroke="#333" stroke-width="1.1"/></svg>
<span style="left:164.40px;top:511.00px;font-size:12.2px;line-height:17px;color:#262626;transform:scaleX(0.9845);transform-origin:0 50%;">Стилистические на<u>б</u>оры</span>
<svg style="left:393.5px;top:514.8px;" width="6" height="9" viewBox="0 0 6 9"><path d="M0.8 0.6 L4.8 4.5 L0.8 8.4" fill="none" stroke="#333" stroke-width="1.1"/></svg>
<span style="left:143.00px;top:339.00px;font-size:12.5px;line-height:18px;color:#fff;font-weight:700;-webkit-text-stroke:2.3px #3a3a3a;paint-order:stroke fill;">A</span>
<div style="left:139px;top:354.2px;width:16px;height:3.7px;background:#000;"></div>
<span style="left:141.40px;top:367.00px;font-size:14px;line-height:20px;color:#fff;font-weight:700;-webkit-text-stroke:2.3px #3a3a3a;paint-order:stroke fill;text-shadow:1.2px 1px 1.2px rgba(0,0,0,0.5);">A</span>
<span style="left:141.80px;top:394.00px;font-size:14px;line-height:20px;color:#fff;font-weight:700;-webkit-text-stroke:2.3px #3a3a3a;paint-order:stroke fill;">A</span>
<span style="left:141.8px;top:411.2px;height:2.6px;width:14px;overflow:hidden;"><span style="left:0;top:-6px;font-size:14px;line-height:20px;font-weight:700;color:#fff;-webkit-text-stroke:1.6px #aaa;paint-order:stroke fill;transform:scaleY(-1);">A</span></span>
<span style="left:141.40px;top:423.00px;font-size:14px;line-height:20px;color:#fff;font-weight:700;-webkit-text-stroke:2.3px #3a3a3a;paint-order:stroke fill;text-shadow:0 0 2.5px rgba(0,0,0,0.6);">A</span>
<span style="left:140.00px;top:455.00px;font-size:9px;line-height:13px;color:#222;">12</span>
<span style="left:149.60px;top:458.00px;font-size:9px;line-height:13px;color:#222;">3</span>
<svg style="left:141px;top:481px;" width="11" height="18" viewBox="0 0 11 18"><path d="M3.5 16.6 V4 C3.5 1.6 5 0.9 6.8 1.7 M1.2 5.9 H8.9 V16.6" fill="none" stroke="#333" stroke-width="1"/><circle cx="8.9" cy="3.1" r="0.75" fill="#333"/></svg>
<span style="left:138.90px;top:511.00px;font-size:12px;line-height:17px;color:#333;transform:scaleX(0.9400);transform-origin:0 50%;font-style:italic;font-family:'Liberation Serif',serif;">abc</span>
<div style="left:16px;top:51px;width:842px;height:517px;border:1px solid #2b579a;border-top:none;border-radius:0 0 9px 9px;box-sizing:border-box;pointer-events:none;"></div>
</div></body></html>
